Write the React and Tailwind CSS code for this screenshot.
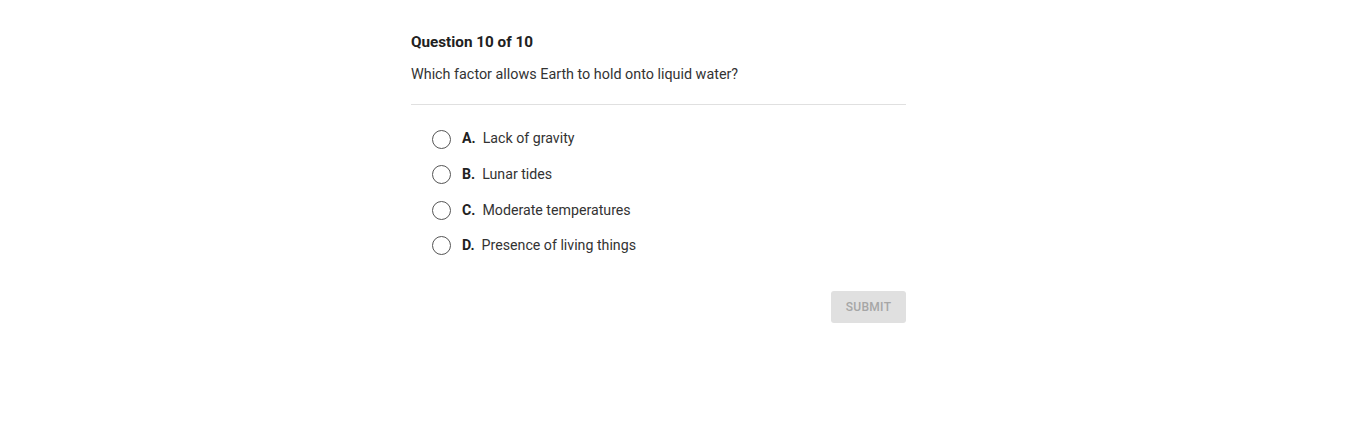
import React, { useState } from 'react';

const options = [
  { letter: 'A.', text: 'Lack of gravity' },
  { letter: 'B.', text: 'Lunar tides' },
  { letter: 'C.', text: 'Moderate temperatures' },
  { letter: 'D.', text: 'Presence of living things' },
];

const App = () => {
  const [selected, setSelected] = useState(null);

  return (
    <div className="min-h-[437px] bg-white font-['Roboto',sans-serif] text-[#212121]">
      <div className="w-[495px] ml-[411px] pt-[32px]">
        <h1 className="text-[15.25px] leading-[20px] font-bold">Question 10 of 10</h1>
        <p className="mt-[13px] text-[14.35px] leading-[20px] text-[#333]">
          Which factor allows Earth to hold onto liquid water?
        </p>
        <div className="mt-[19px] border-t border-[#e0e0e0]" />

        {/* Options */}
        <div className="mt-[24px] pl-[21px] flex flex-col gap-[15.6px]">
          {options.map((o, i) => (
            <label
              key={o.letter}
              className="flex items-center h-[20px] cursor-pointer"
              onClick={() => setSelected(i)}
            >
              <span className="w-[19px] h-[19px] rounded-full border border-[#555] flex items-center justify-center">
                {selected === i && <span className="w-[9px] h-[9px] rounded-full bg-[#555]" />}
              </span>
              <span className="ml-[11px] text-[14.2px] font-bold text-[#212121]">{o.letter}</span>
              <span className="ml-[7px] text-[14.2px] text-[#333]">{o.text}</span>
            </label>
          ))}
        </div>

        <div className="mt-[35px] flex justify-end">
          <button className="w-[75px] h-[32px] rounded-[3px] bg-[#e0e0e0] text-[12px] font-medium tracking-[0.3px] text-[#a6a6a6] uppercase">
            Submit
          </button>
        </div>
      </div>
    </div>
  );
};

export default App;
